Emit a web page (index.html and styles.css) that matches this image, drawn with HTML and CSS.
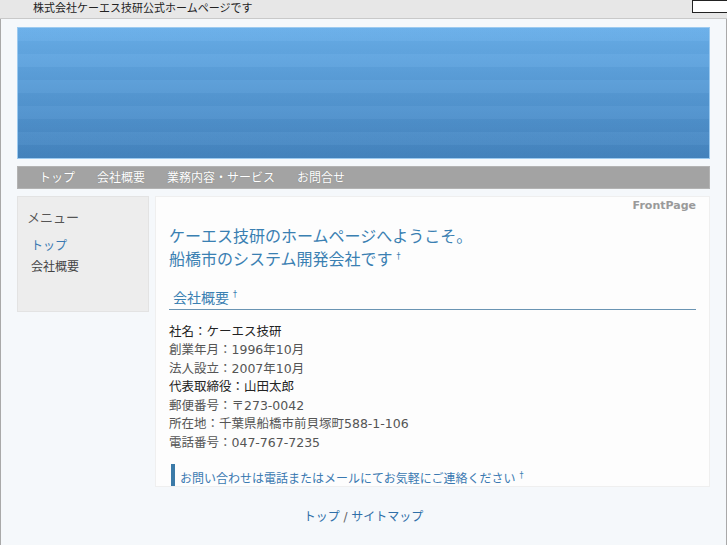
FILE: index.html
```html
<!DOCTYPE html>
<html lang="ja">
<head>
  <meta charset="UTF-8" />
  <title>ケーエス技研</title>
  <link rel="stylesheet" href="styles.css">
</head>
<body>

  <div class="topbar">
    <p class="tagline">株式会社ケーエス技研公式ホームページです</p>
    <input type="text" class="search" />
  </div>

  <div class="wrapper">
    <div class="banner"></div>

    <!-- global menu -->
    <ul class="nav">
      <li><a href="#">トップ</a></li>
      <li><a href="#">会社概要</a></li>
      <li><a href="#">業務内容・サービス</a></li>
      <li><a href="#">お問合せ</a></li>
    </ul>

    <div class="columns">
      <div class="sidebar">
        <h4>メニュー</h4>
        <a href="#" class="current">トップ</a>
        <a href="#">会社概要</a>
      </div>

      <div class="main">
        <p class="pagename">FrontPage</p>
        <h1>ケーエス技研のホームページへようこそ。<br>船橋市のシステム開発会社です<a href="#" class="anchor">†</a></h1>

        <h2>会社概要<a href="#" class="anchor">†</a></h2>
        <div class="info">
          <p class="strong">社名：ケーエス技研</p>
          <p>創業年月：1996年10月</p>
          <p>法人設立：2007年10月</p>
          <p class="strong">代表取締役：山田太郎</p>
          <p>郵便番号：〒273-0042</p>
          <p>所在地：千葉県船橋市前貝塚町588-1-106</p>
          <p>電話番号：047-767-7235</p>
        </div>

        <h3>お問い合わせは電話またはメールにてお気軽にご連絡ください<a href="#" class="anchor">†</a></h3>
      </div>
    </div>

    <div class="footer">
      <a href="#">トップ</a> / <a href="#">サイトマップ</a>
    </div>
  </div>

</body>
</html>
```

FILE: styles.css
```css
* { box-sizing: border-box; margin: 0; padding: 0; }
body {
  font-family: "DejaVu Sans", "Noto Sans CJK JP", sans-serif;
  background: #f5f8fb;
  color: #555;
}
a { text-decoration: none; color: #3a79b1; }

.topbar {
  display: flex;
  justify-content: space-between;
  align-items: flex-start;
  height: 19px;
  background: #e7e7e7;
  border-bottom: 1px solid #c9c9c9;
}
.tagline {
  padding-left: 33px;
  font-size: 11px;
  line-height: 18px;
  color: #222;
}
.search {
  width: 36px;
  height: 13px;
  margin-right: -1px;
  border: 1px solid #222;
  background: #fff;
}

.wrapper {
  height: 526px;
  padding: 8px 16px;
  border-left: 1px solid #a9a9a9;
  border-right: 1px solid #a9a9a9;
}
.banner {
  height: 132px;
  border: 1px solid #9ccaf0;
  background:
    repeating-linear-gradient(180deg, rgba(255,255,255,0.03) 0 13px, rgba(0,0,0,0.02) 13px 26px),
    linear-gradient(180deg, #68aee9, #4484bf);
}

.nav {
  display: flex;
  gap: 22px;
  list-style: none;
  height: 23px;
  margin-top: 7px;
  padding-left: 21px;
  background: #a3a3a3;
  border: 1px solid #b3b3b3;
}
.nav a {
  color: #fff;
  font-size: 12px;
  line-height: 21px;
  text-shadow: 0 0 1px #777;
}

.columns {
  display: flex;
  gap: 6px;
  margin-top: 7px;
}
.sidebar {
  width: 132px;
  height: 116px;
  padding: 10px 9px;
  background: #ededed;
  border: 1px solid #e3e3e3;
}
.sidebar h4 {
  font-size: 13px;
  font-weight: normal;
  color: #555;
  margin-bottom: 10px;
}
.sidebar a {
  display: block;
  padding-left: 4px;
  font-size: 12px;
  line-height: 21px;
  color: #444;
}
.sidebar a.current { color: #3a79b1; }

.main {
  flex: 1;
  height: 291px;
  padding: 2px 13px 0;
  background: #fdfdfd;
  border: 1px solid #efefef;
  overflow: hidden;
}
.pagename {
  text-align: right;
  font-size: 11px;
  font-weight: bold;
  color: #9a9a9a;
}
h1 {
  margin-top: 15px;
  font-size: 16px;
  font-weight: normal;
  line-height: 20px;
  color: #3a80b2;
}
.anchor {
  font-size: 8px;
  vertical-align: super;
  margin-left: 4px;
  color: #3a80b2;
}
h2 {
  margin-top: 15px;
  padding: 0 0 1px 4px;
  font-size: 14px;
  font-weight: normal;
  line-height: 20px;
  color: #3a80b2;
  border-bottom: 1px solid #6a94b3;
}
.info {
  margin-top: 13px;
  font-size: 12.5px;
  line-height: 18.5px;
}
.info .strong { color: #222; }
h3 {
  margin-top: 12px;
  margin-left: 2px;
  padding-left: 5px;
  font-size: 12px;
  font-weight: normal;
  line-height: 24px;
  color: #3a79b1;
  border-left: 4px solid #3b7aa8;
}

.footer {
  margin-top: 20px;
  text-align: center;
  font-size: 12px;
  color: #666;
}
.footer a { color: #2f6fa8; }
```
